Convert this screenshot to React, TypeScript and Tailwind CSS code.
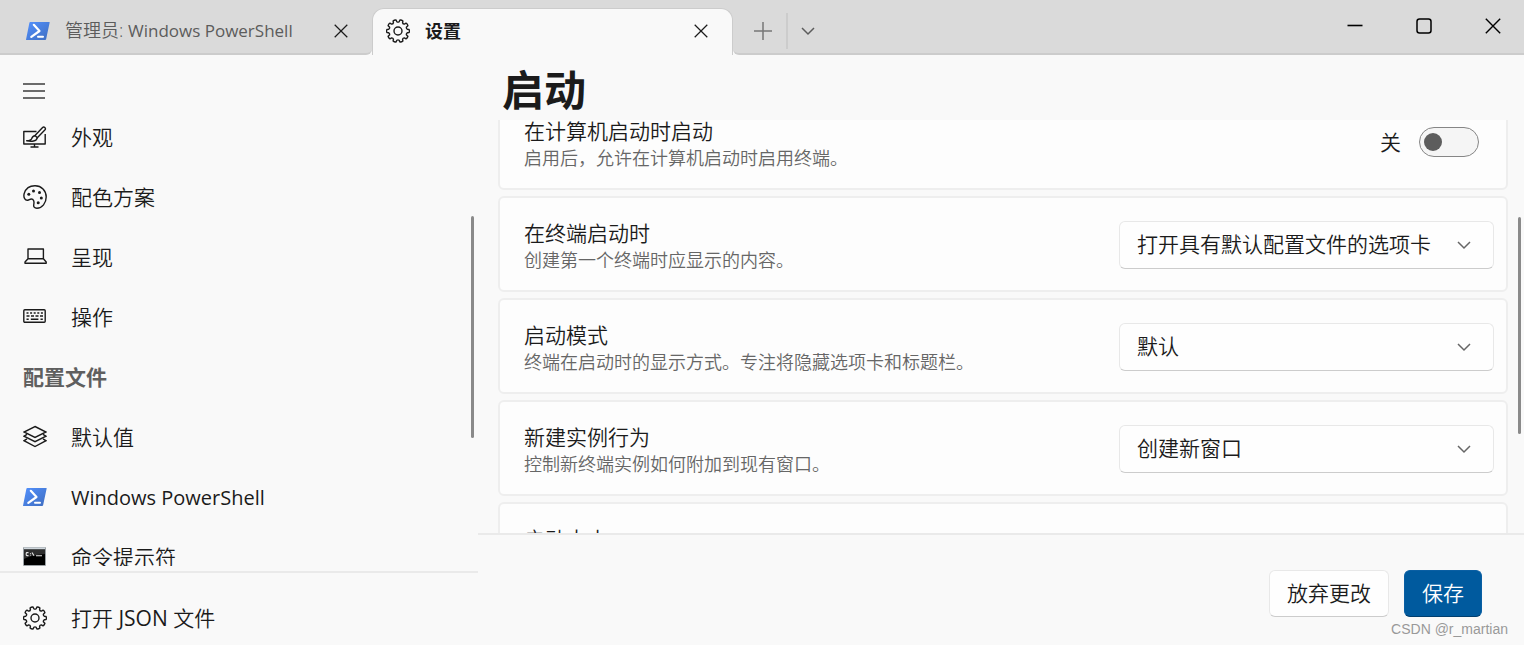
import { useState } from 'react';
import type { ReactNode } from 'react';

interface NavItem {
  id: string;
  label: ReactNode;
  icon: ReactNode;
}

interface ChoiceSetting {
  id: string;
  title: string;
  description: string;
  options: string[];
}

// Outline of the gear: ten rounded teeth, with a notch at the top
const GEAR_PATH = Array.from({ length: 10 }, (_, i) => {
  const point = (deg: number, r: number) => {
    const a = ((i * 36 + deg - 90) * Math.PI) / 180;
    return `${(12 + r * Math.cos(a)).toFixed(2)} ${(12 + r * Math.sin(a)).toFixed(2)}`;
  };
  return `${i === 0 ? 'M' : 'L'}${point(-7, 9.4)} Q${point(0, 8.4)} ${point(7, 9.4)} L${point(10, 11.2)} Q${point(18, 11.8)} ${point(26, 11.2)}`;
}).join(' ') + 'Z';

function GearIcon() {
  return (
    <svg viewBox="0 0 24 24" className="size-6 shrink-0" fill="none" stroke="#1b1b1b" strokeWidth="1.4" strokeLinejoin="round">
      <path d={GEAR_PATH} />
      <circle cx="12" cy="12" r="4" />
    </svg>
  );
}

function PowerShellIcon() {
  return (
    <svg viewBox="0 0 24 24" className="size-6 shrink-0" fill="none">
      <defs>
        <linearGradient id="ps-blue" x1="0" y1="0" x2="1" y2="1">
          <stop offset="0" stopColor="#5391fe" />
          <stop offset="1" stopColor="#3e6dbf" />
        </linearGradient>
      </defs>
      <path d="M4.3 3h18.8a.5.5 0 0 1 .5.7l-3.5 16.5a1 1 0 0 1-1 .8H.6a.5.5 0 0 1-.5-.7L3.4 3.8a1 1 0 0 1 .9-.8z" fill="url(#ps-blue)" />
      <path d="M7.8 5.8l5.7 6.2-8.2 5.9" stroke="#fff" strokeWidth="2.2" strokeLinecap="round" strokeLinejoin="round" />
      <path d="M12 17.8h5" stroke="#fff" strokeWidth="2" strokeLinecap="round" />
    </svg>
  );
}

function CommandPromptIcon() {
  return (
    <svg viewBox="0 0 24 24" className="size-6 shrink-0" fill="none">
      <rect x="0" y="2" width="23" height="19" rx="1" fill="#9aa0a4" />
      <path d="M1 3.2h21" stroke="#d5dde2" strokeWidth="1.4" />
      <rect x="1" y="4.500" width="21" height="15.500" fill="#000" />
      <path d="M1 5h21v4Q8 10 1 14z" fill="#2e2e2e" />
      <path d="M5.500 7.600H4a.8.8 0 0 0-.8.8v1.400a.8.8 0 0 0 .8.8h1.500M7.500 8v.8M7.500 9.800v.8M9 7.500l2 3.300M13 10.800h6" stroke="#e6e6e6" strokeWidth="1.100" />
    </svg>
  );
}

function AppearanceIcon() {
  return (
    <svg viewBox="0 0 24 24" className="size-6 shrink-0" fill="none" stroke="#1b1b1b" strokeWidth="1.4" strokeLinejoin="round">
      <path d="M13.500 6.500H.8v12.500h21.400V9M11.500 19v3M7.500 22h8" />
      <path d="M21.800 2.500c.8.7.7 1.700 0 2.500l-7.500 7.700-2.300-2.200 7.600-8c.7-.7 1.500-.7 2.200 0z" />
      <path d="M12 10.700c-2 .2-2.800 1.300-3.300 2.900-.3 1.100-1 1.800-5 2.200 4.800 1 9.900.6 10.500-3" />
    </svg>
  );
}

function PaletteIcon() {
  return (
    <svg viewBox="0 0 24 24" className="size-6 shrink-0" fill="none">
      <path
        d="M1.200 8.500C2.700 3.800 7 .7 12.200.8c6.200 0 11 5 11 11.200 0 6-4 11.200-9.300 11.200-2.600 0-3.600-1.600-3.100-3.900.5-2.500 0-5.300-2.500-5.300-1.300 0-2 .8-3.300 1.200C2.200 15.900.1 12.500 1.200 8.500z"
        stroke="#1b1b1b"
        strokeWidth="1.4"
      />
      <g fill="#1b1b1b">
        <circle cx="5.800" cy="9.200" r="1.500" />
        <circle cx="10.500" cy="6" r="1.500" />
        <circle cx="16.500" cy="7.500" r="1.500" />
        <circle cx="18.300" cy="13" r="1.500" />
        <circle cx="15.200" cy="17.700" r="1.500" />
      </g>
    </svg>
  );
}

function LaptopIcon() {
  return (
    <svg viewBox="0 0 24 24" className="size-6 shrink-0" fill="none" stroke="#1b1b1b" strokeWidth="1.4" strokeLinejoin="round">
      <path d="M5 13.800V4h15.400v9.800M5 13.800h15.400l2.800 3.200v1.200H2V17z" />
    </svg>
  );
}

function KeyboardIcon() {
  return (
    <svg viewBox="0 0 24 24" className="size-6 shrink-0" fill="none" stroke="#1b1b1b" strokeWidth="1.4">
      <rect x=".8" y="4.800" width="21.400" height="12.400" rx="1" />
      <path d="M3.500 8h16.500" strokeDasharray="2 1.600" />
      <path d="M3.500 11h16.500" strokeDasharray="3 1.500" />
      <path d="M3.500 14.200h2.200M7.800 14.200h7.600M17.500 14.200h2.300" />
    </svg>
  );
}

function LayersIcon() {
  return (
    <svg viewBox="0 0 24 24" className="size-6 shrink-0" fill="none" stroke="#1b1b1b" strokeWidth="1.4">
      <path d="M12 1.500L23 7 12 12.500 1 7z" />
      <path d="M4 9.400L1 11.200l11 5.500 11-5.500-3-1.800" />
      <path d="M4 13.800L1 15.700l11 5.800 11-5.800-3-1.900" />
    </svg>
  );
}

function CloseIcon({ className }: { className: string }) {
  return (
    <svg viewBox="0 0 16 16" className={className} fill="none" stroke="currentColor" strokeWidth="1.400">
      <path d="M.8.8l14.400 14.400M15.200.8L.8 15.200" />
    </svg>
  );
}

function ChevronIcon({ className }: { className: string }) {
  return (
    <svg viewBox="0 0 14 14" className={className} fill="none" stroke="currentColor" strokeWidth="1.500">
      <path d="M1 4l6 6 6-6" />
    </svg>
  );
}

const GENERAL_ITEMS: NavItem[] = [
  { id: 'appearance', label: '外观', icon: <AppearanceIcon /> },
  { id: 'schemes', label: '配色方案', icon: <PaletteIcon /> },
  { id: 'rendering', label: '呈现', icon: <LaptopIcon /> },
  { id: 'actions', label: '操作', icon: <KeyboardIcon /> },
];

const PROFILE_ITEMS: NavItem[] = [
  { id: 'defaults', label: '默认值', icon: <LayersIcon /> },
  { id: 'powershell', label: <span className="text-xl font-normal">Windows PowerShell</span>, icon: <PowerShellIcon /> },
  { id: 'cmd', label: '命令提示符', icon: <CommandPromptIcon /> },
];

const CHOICES: ChoiceSetting[] = [
  {
    id: 'on-start',
    title: '在终端启动时',
    description: '创建第一个终端时应显示的内容。',
    options: ['打开具有默认配置文件的选项卡', '打开上一个会话中的窗口'],
  },
  {
    id: 'launch-mode',
    title: '启动模式',
    description: '终端在启动时的显示方式。专注将隐藏选项卡和标题栏。',
    options: ['默认', '最大化', '全屏', '专注'],
  },
  {
    id: 'new-instance',
    title: '新建实例行为',
    description: '控制新终端实例如何附加到现有窗口。',
    options: ['创建新窗口', '附加到最近使用的窗口'],
  },
];

function TitleBar() {
  return (
    <header className="flex h-[55px] shrink-0 bg-[#dadada]">
      <div className="w-[372px] shrink-0 bg-[#f9f9f9]">
        <div className="flex h-full items-center rounded-br-md border-b-2 border-[#cccccc] bg-[#dadada] pr-4 pl-[26px] pt-2">
          <PowerShellIcon />
          <span className="ml-[15px] flex-1 truncate text-lg text-[#5c5c5c]">
            管理员: <span className="text-[17px] font-normal">Windows PowerShell</span>
          </span>
          <button aria-label="关闭选项卡" className="p-2 text-[#1b1b1b]">
            <CloseIcon className="size-[14px]" />
          </button>
        </div>
      </div>
      <div className="mt-2 flex w-[361px] shrink-0 items-center rounded-t-xl border border-b-0 border-[#cccccc] bg-[#f9f9f9] pr-4 pb-[2px] pl-[13px]">
        <GearIcon />
        <span className="ml-[15px] flex-1 text-lg font-bold text-[#1b1b1b]">设置</span>
        <button aria-label="关闭选项卡" className="p-2 text-[#1b1b1b]">
          <CloseIcon className="size-[14px]" />
        </button>
      </div>
      <div className="min-w-0 flex-1 bg-[#f9f9f9]">
        <div className="flex h-full rounded-bl-md border-b-2 border-[#cccccc] bg-[#dadada]">
          <div className="flex items-center pt-2 text-[#5c5c5c]">
            <button aria-label="新建选项卡" className="flex h-9 w-[55px] items-center justify-center border-r-2 border-[#cccccc] pl-[6px]">
              <svg viewBox="0 0 18 18" className="size-[18px]" stroke="#777777" strokeWidth="1.500">
                <path d="M9 0v18M0 9h18" />
              </svg>
            </button>
            <button aria-label="更多" className="flex h-9 w-10 items-center justify-center">
              <ChevronIcon className="size-[14px]" />
            </button>
          </div>
          <div className="ml-auto flex h-[51px] gap-[6px] text-black">
            <button aria-label="最小化" className="flex w-[63px] items-center justify-center">
              <svg viewBox="0 0 16 16" className="size-4" stroke="currentColor" strokeWidth="1.600">
                <path d="M.5 7.500h15" />
              </svg>
            </button>
            <button aria-label="最大化" className="flex w-[63px] items-center justify-center">
              <svg viewBox="0 0 16 16" className="size-4" fill="none" stroke="currentColor" strokeWidth="1.500">
                <rect x="1" y="1" width="14" height="14" rx="2.500" />
              </svg>
            </button>
            <button aria-label="关闭" className="flex w-[63px] items-center justify-center">
              <CloseIcon className="size-4" />
            </button>
          </div>
        </div>
      </div>
    </header>
  );
}

function NavButton({ item }: { item: NavItem }) {
  return (
    <li>
      <button className="flex h-[60px] w-full items-center gap-6 pl-[23px] text-left">
        <span className="pb-[3px]">{item.icon}</span>
        <span>{item.label}</span>
      </button>
    </li>
  );
}

function Sidebar() {
  return (
    <aside className="relative flex w-[478px] shrink-0 flex-col">
      <div className="flex h-[53px] shrink-0 items-center pt-[18px] pl-[23px]">
        <button aria-label="导航">
          <svg viewBox="0 0 22 16" className="h-4 w-[22px]" stroke="#3c3c3c" strokeWidth="1.500">
            <path d="M0 1h22M0 8h22M0 15h22" />
          </svg>
        </button>
      </div>
      <nav className="min-h-0 flex-1 overflow-hidden">
        <ul>
          {GENERAL_ITEMS.map((item) => (
            <NavButton key={item.id} item={item} />
          ))}
          <li className="flex h-[60px] items-center pl-[23px] font-bold text-[#5f5f5f]">配置文件</li>
          {PROFILE_ITEMS.map((item) => (
            <NavButton key={item.id} item={item} />
          ))}
        </ul>
      </nav>
      <div className="mt-[5px] h-[74px] shrink-0 border-t-2 border-[#eaeaea] pt-4">
        <button className="flex h-[60px] w-full items-center gap-6 pl-[23px] text-left">
          <span className="pb-[3px]"><GearIcon /></span>
          <span>打开 <span className="font-normal">JSON</span> 文件</span>
        </button>
      </div>
      <div className="absolute top-[161px] right-1 h-[222px] w-[3px] rounded-full bg-[#8a8a8a]" />
    </aside>
  );
}

function SettingCard({ htmlFor, title, description, children }: {
  htmlFor: string;
  title: string;
  description?: string;
  children?: ReactNode;
}) {
  return (
    <div className="flex h-24 items-center justify-between rounded-md border-2 border-[#eeeeee] bg-[#fdfdfd] pr-3 pl-6">
      <div className="pt-1">
        <label htmlFor={htmlFor} className="block leading-7">{title}</label>
        <p className="text-lg leading-[26px] text-[#666666]">{description}</p>
      </div>
      {children}
    </div>
  );
}

export default function App() {
  const [launchAtStartup, setLaunchAtStartup] = useState(false);

  return (
    <div className="flex h-screen flex-col overflow-hidden bg-[#f9f9f9] font-['Open_Sans','Noto_Sans_CJK_SC',sans-serif] text-[21px] font-[350] text-[#1b1b1b]">
      <TitleBar />
      <div className="flex min-h-0 flex-1">
        <Sidebar />
        <main className="relative flex min-w-0 flex-1 flex-col">
          <h1 className="flex h-[65px] shrink-0 items-center pt-1 pl-6 text-[42px] leading-none font-bold">启动</h1>
          <div className="min-h-0 flex-1 overflow-hidden pr-4 pl-5">
            {/* 列表已向下滚动一部分 */}
            <div className="-mt-[26px] flex flex-col gap-[6px]">
              <SettingCard htmlFor="startup" title="在计算机启动时启动" description="启用后，允许在计算机启动时启用终端。">
                <label className="flex items-center gap-[18px] pr-[15px]">
                  <span className="pt-[2px]">{launchAtStartup ? '开' : '关'}</span>
                  <input
                    id="startup"
                    type="checkbox"
                    role="switch"
                    checked={launchAtStartup}
                    onChange={(e) => setLaunchAtStartup(e.target.checked)}
                    className="flex h-[30px] w-[60px] appearance-none items-center rounded-full border border-[#868686] bg-[#f5f5f5] px-1 before:size-[18px] before:rounded-full before:bg-[#5d5d5d] checked:justify-end"
                  />
                </label>
              </SettingCard>
              {CHOICES.map((choice) => (
                <SettingCard key={choice.id} htmlFor={choice.id} title={choice.title} description={choice.description}>
                  <div className="relative mt-[2px] w-[375px] shrink-0">
                    <select
                      id={choice.id}
                      className="h-12 w-full appearance-none rounded-md border border-[#e8e8e8] border-b-[#cccccc] bg-[#fefefe] pr-12 pl-[17px]"
                    >
                      {choice.options.map((option) => (
                        <option key={option}>{option}</option>
                      ))}
                    </select>
                    <ChevronIcon className="pointer-events-none absolute top-[17px] right-[23px] size-[14px] text-[#666666]" />
                  </div>
                </SettingCard>
              ))}
              <SettingCard htmlFor="launch-size" title="启动大小" description="启动时以字符为单位加载的列数和行数。" />
            </div>
          </div>
          <footer className="flex h-28 shrink-0 items-start justify-end gap-[15px] border-t-2 border-[#eaeaea] pt-[35px] pr-[42px]">
            <button className="h-[47px] rounded-md border border-[#e8e8e8] border-b-[#cccccc] bg-[#fefefe] px-[17px]">放弃更改</button>
            <button className="h-[47px] rounded-md border border-[#0a5fa3] border-b-[#003e6e] bg-[#005a9e] px-[17px] text-white">保存</button>
          </footer>
          <div className="absolute top-[162px] right-[3px] h-[217px] w-[3px] rounded-full bg-[#8a8a8a]" />
          <span className="absolute right-4 bottom-1 font-['Liberation_Sans',sans-serif] text-sm leading-6 text-[#999999]">CSDN @r_martian</span>
        </main>
      </div>
    </div>
  );
}
